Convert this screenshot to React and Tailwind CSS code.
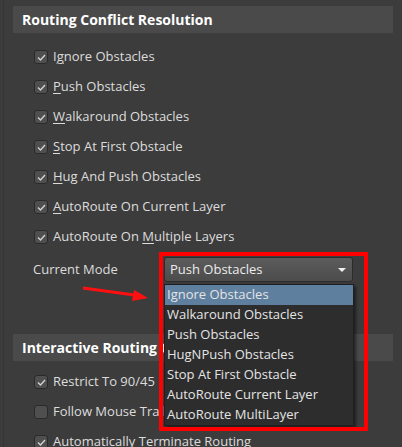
const font = { fontFamily: '"Segoe UI", "Open Sans", "Noto Sans", sans-serif' };

const Check = ({ checked }) => (
    <span className="w-[14px] h-[14px] rounded-[3px] bg-[#4f4f4f] border border-[#2a2a2a] flex items-center justify-center shrink-0">
        {checked && (
            <svg width="9" height="7" viewBox="0 0 9 7">
                <path d="M1 3.5 L3.5 6 L8 1" fill="none" stroke="#d4d4d4" strokeWidth="1.3" />
            </svg>
        )}
    </span>
);

const Label = ({ text, key1 }) => {
    const i = key1 ?? 0;
    return (
        <span>
            {text.slice(0, i)}
            <span className="underline underline-offset-2">{text[i]}</span>
            {text.slice(i + 1)}
        </span>
    );
};

const Row = ({ text, u, checked = true }) => (
    <div className="h-[30px] flex items-center gap-[5px]">
        <Check checked={checked} />
        {u === undefined ? <span>{text}</span> : <Label text={text} key1={u} />}
    </div>
);

const Header = ({ children }) => (
    <div className="h-[27px] bg-[#4a4a4a] pl-[9px] flex items-center text-[14px] font-bold text-white">
        {children}
    </div>
);

const options = [
    "Ignore Obstacles",
    "Walkaround Obstacles",
    "Push Obstacles",
    "HugNPush Obstacles",
    "Stop At First Obstacle",
    "AutoRoute Current Layer",
    "AutoRoute MultiLayer",
];

export default function App() {
    return (
        <div className="relative w-[402px] h-[447px] overflow-hidden bg-[#3c3c3c] text-[13px] text-[#dcdcdc]" style={font}>
            <div className="absolute left-[3px] top-0 bottom-0 w-px bg-[#353535]" />
            <div className="pl-[13px] pr-[9px] pt-[6px]">
                <Header>Routing Conflict Resolution</Header>
                <div className="pl-[21px] mt-[9px]">
                    <Row text="Ignore Obstacles" u={1} />
                    <Row text="Push Obstacles" u={0} />
                    <Row text="Walkaround Obstacles" u={0} />
                    <Row text="Stop At First Obstacle" u={0} />
                    <Row text="Hug And Push Obstacles" u={0} />
                    <Row text="AutoRoute On Current Layer" u={0} />
                    <Row text="AutoRoute On Multiple Layers" u={13} />
                </div>
                <div className="mt-[5px] h-[25px] flex items-center">
                    <span className="w-[151px] pl-[20px]">Current Mode</span>
                    <div className="w-[189px] h-[25px] rounded-[3px] border border-[#2c2c2c] bg-gradient-to-b from-[#5c5c5c] to-[#4c4c4c] flex items-center justify-between pl-[5px] pr-[6px] text-[#ececec]">
                        <span>Push Obstacles</span>
                        <svg width="8" height="4" viewBox="0 0 8 4"><path d="M0 0 L8 0 L4 4 Z" fill="#f0f0f0" /></svg>
                    </div>
                </div>
                <div className="mt-[52px]">
                    <Header>Interactive Routing Options</Header>
                </div>
                <div className="pl-[21px] mt-[6px]">
                    <Row text="Restrict To 90/45" />
                    <Row text="Follow Mouse Trail" checked={false} />
                    <Row text="Automatically Terminate Routing" />
                </div>
            </div>

            <div className="absolute left-[164px] top-[284px] w-[190px] bg-[#2d2d2d] border border-[#1f1f1f] shadow-[2px_2px_3px_rgba(0,0,0,0.5)] text-[#e4e4e4]">
                {options.map((o, i) => (
                    <div key={o} className={`h-[20px] flex items-center pl-[2px] ${i === 0 ? "bg-[#5f7f9f]" : ""}`}>
                        {o}
                    </div>
                ))}
            </div>

            <div className="absolute left-[159px] top-[252px] w-[209px] h-[179px] border-4 border-[#ff0000]" />

            <svg className="absolute left-0 top-0" width="402" height="447" viewBox="0 0 402 447">
                <path d="M83 288 L138 295.5" stroke="#ff1010" strokeWidth="3" fill="none" />
                <path d="M148 298 L134 290 L132 301 Z" fill="#ff1010" />
            </svg>
        </div>
    );
}
